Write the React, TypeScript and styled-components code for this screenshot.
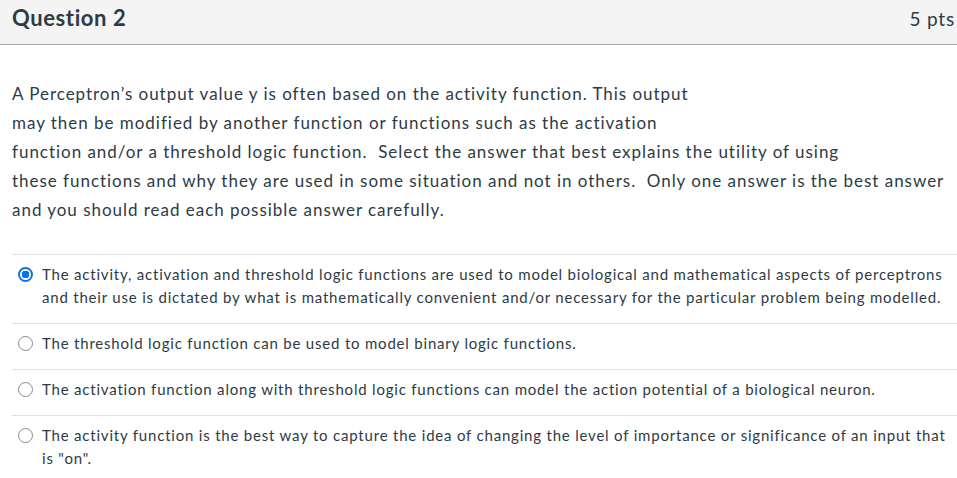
import styled, { createGlobalStyle } from 'styled-components';

const GlobalStyle = createGlobalStyle`
  html, body {
    margin: 0;
    padding: 0;
    background: #ffffff;
    font-family: 'Lato', 'Open Sans', sans-serif;
    color: #2d3b45;
  }
`;

const Page = styled.div`
  width: 957px;
  height: 478px;
  overflow: hidden;
  background: #ffffff;
`;

const Header = styled.div`
  display: flex;
  justify-content: space-between;
  align-items: center;
  height: 44px;
  padding: 0 2px 0 12px;
  background: #f4f4f4;
  border-bottom: 1px solid #a9a9a9;
`;

const Title = styled.h2`
  margin: 0;
  font-size: 22px;
  font-weight: 700;
  letter-spacing: 0.6px;
  color: #2d3b45;
  padding-bottom: 10px;
`;

const Points = styled.span`
  font-size: 19px;
  letter-spacing: 0.8px;
  color: #2d3b45;
  padding-bottom: 8px;
`;

const Body = styled.div`
  padding: 34px 0 0 12px;
`;

const QuestionText = styled.p`
  margin: 0 0 30px;
  font-size: 17px;
  line-height: 29px;
  letter-spacing: 0.97px;
  color: #2d3b45;
  white-space: nowrap;
`;

const Answers = styled.div`
  display: flex;
  flex-direction: column;
`;

const AnswerRow = styled.label`
  display: flex;
  align-items: flex-start;
  gap: 9px;
  padding: 8px 10px 14px 6px;
  border-top: 1px solid #e0e0e0;
  font-size: 15px;
  line-height: 23px;
  letter-spacing: 0.8px;
  color: #2d3b45;
  cursor: pointer;
`;

const Radio = styled.input.attrs({ type: 'radio' })`
  appearance: none;
  flex: none;
  width: 15px;
  height: 15px;
  margin: 4px 0 0;
  border-radius: 50%;
  border: 1px solid #8a8a8a;
  background: #ffffff;
  box-sizing: border-box;
  &:checked {
    border: 2px solid #0b74e5;
    background: radial-gradient(circle, #0b74e5 0 3.6px, #ffffff 4px);
  }
`;

const AnswerText = styled.span`
  flex: 1;
`;

const answers = [
  'The activity, activation and threshold logic functions are used to model biological and mathematical aspects of perceptrons and their use is dictated by what is mathematically convenient and/or necessary for the particular problem being modelled.',
  'The threshold logic function can be used to model binary logic functions.',
  'The activation function along with threshold logic functions can model the action potential of a biological neuron.',
  'The activity function is the best way to capture the idea of changing the level of importance or significance of an input that is "on".',
];

function App() {
  return (
    <Page>
      <GlobalStyle />
      <Header>
        <Title>Question 2</Title>
        <Points>5 pts</Points>
      </Header>
      <Body>
        <QuestionText>
          A Perceptron’s output value y is often based on the activity function. This output
          <br />
          may then be modified by another function or functions such as the activation
          <br />
          function and/or a threshold logic function.&nbsp; Select the answer that best explains the utility of using
          <br />
          these functions and why they are used in some situation and not in others.&nbsp; Only one answer is the best answer
          <br />
          and you should read each possible answer carefully.
        </QuestionText>
        <Answers>
          {answers.map((text, i) => (
            <AnswerRow key={i}>
              <Radio name="q2" defaultChecked={i === 0} />
              <AnswerText>{text}</AnswerText>
            </AnswerRow>
          ))}
        </Answers>
      </Body>
    </Page>
  );
}

export default App;
